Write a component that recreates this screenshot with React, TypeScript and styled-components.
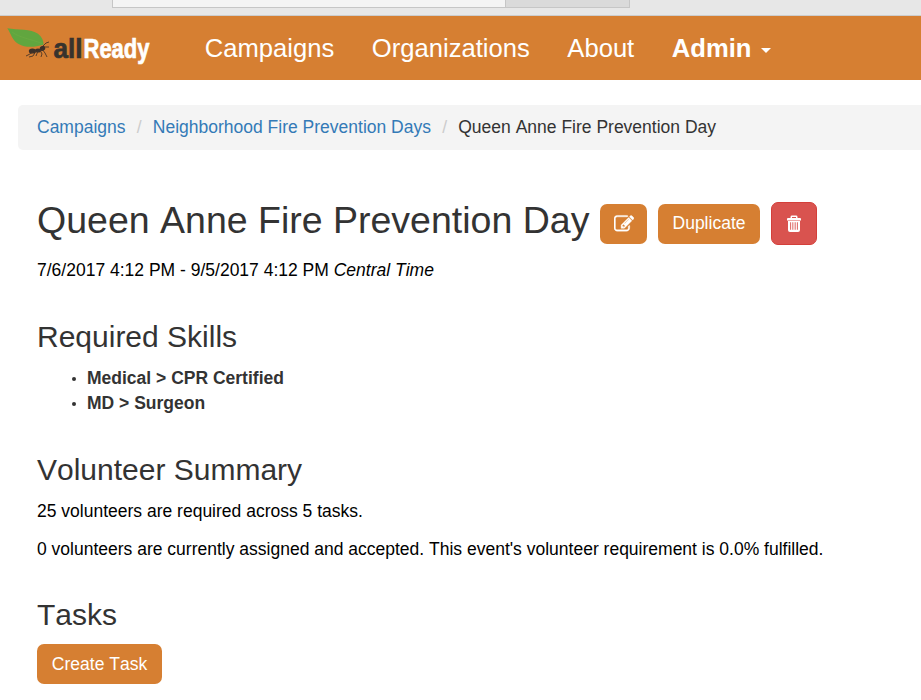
import React from 'react';
import styled, { createGlobalStyle } from 'styled-components';

const orange = '#d67f32';

const GlobalStyle = createGlobalStyle`
  * { box-sizing: border-box; }
  body {
    margin: 0;
    background: #fff;
    color: #000;
    font: 17.5px/25px "Liberation Sans", Arial, sans-serif;
    font-kerning: none;
    overflow: hidden;
  }
`;

const BrowserStrip = styled.div`
  display: flex;
  height: 16px;
  padding-left: 112px;
  background: #e7e7e7;
  border-bottom: 1px solid #cdcdcd;
`;

const AddressField = styled.div`
  width: 394px;
  height: 8px;
  background: #f4f4f4;
  border: 1px solid #c6c6c6;
  border-top: 0;
`;

const AddressActions = styled.div`
  width: 124px;
  height: 8px;
  background: #dadada;
  border: solid #c6c6c6;
  border-width: 0 1px 1px 0;
`;

const Navbar = styled.nav`
  display: flex;
  height: 64px;
  background: ${orange};
`;

const Logo = styled.svg`
  flex: none;
  width: 186px;
  height: 64px;
`;

const NavLink = styled.a<{ $bold?: boolean }>`
  display: flex;
  align-items: center;
  height: 64px;
  padding: 0 18.75px;
  color: #fff;
  font-size: 25.62px;
  font-weight: ${({ $bold }) => ($bold ? 700 : 400)};
  text-decoration: none;
`;

const Caret = styled.span`
  margin: 5px 0 0 10px;
  border: 5px solid transparent;
  border-top-color: #fff;
  border-bottom: 0;
`;

const Breadcrumb = styled.ol`
  display: flex;
  height: 45px;
  margin: 25px 0 0 18px;
  padding: 10px 19px;
  list-style: none;
  background: #f4f4f4;
  border-radius: 5px 0 0 5px;
  line-height: 24px;
`;

const Crumb = styled.li<{ $current?: boolean }>`
  color: ${({ $current }) => ($current ? '#333' : '#337ab7')};

  &:not(:first-child)::before {
    content: '/';
    padding: 0 11.2px;
    color: #ccc;
  }
`;

const Content = styled.main`
  padding: 0 37px;
`;

const TitleRow = styled.header`
  display: flex;
  align-items: center;
  height: 43px;
  margin-top: 52px;
`;

const Title = styled.h2`
  width: 552px;
  margin: -6px 11px 0 0;
  color: #333;
  font-size: 37.5px;
  font-weight: 400;
  line-height: 41px;
  white-space: nowrap;
`;

const Button = styled.button<{ $width: number; $danger?: boolean }>`
  display: flex;
  align-items: center;
  justify-content: center;
  flex: none;
  width: ${({ $width }) => $width}px;
  height: ${({ $danger }) => ($danger ? 43 : 40)}px;
  margin: 0 11px 0 0;
  padding: 0;
  color: #fff;
  background: ${({ $danger }) => ($danger ? '#d9534f' : orange)};
  border: ${({ $danger }) => ($danger ? '1px solid #d43f3a' : '0')};
  border-radius: 7px;
  font: 17.5px/25px "Liberation Sans", Arial, sans-serif;
  font-kerning: none;
`;

const Icon = styled.svg`
  width: 20px;
  height: 20px;
  fill: currentColor;
`;

const Dates = styled.p`
  margin: 13px 0 0;
`;

const Section = styled.section<{ $gap: number }>`
  margin-top: ${({ $gap }) => $gap}px;
`;

const Heading = styled.h3`
  margin: 0 0 13px;
  color: #333;
  font-size: 30px;
  font-weight: 400;
  line-height: 33px;
`;

const Skills = styled.ul`
  margin: 0;
  padding: 0;
  list-style: none;
`;

const Skill = styled.li`
  display: flex;
  align-items: center;
  padding-left: 35px;
  color: #333;
  font-weight: 700;

  &::before {
    content: '';
    width: 4px;
    height: 4px;
    margin-right: 11px;
    border-radius: 50%;
    background: #333;
  }
`;

const Paragraph = styled.p`
  margin: 0 0 13px;
`;

const EditIcon = () => (
  <Icon viewBox="0 0 1792 1792">
    <path
      stroke="currentColor"
      strokeWidth="35"
      d="M888 1184l116-116-152-152-116 116v56h96v96h56zm440-720q-16-16-33 1l-350 350q-17 17-1 33t33-1l350-350q17-17 1-33zm80 594v190q0 119-84.5 203.5t-203.5 84.5h-832q-119 0-203.5-84.5t-84.5-203.5v-832q0-119 84.5-203.5t203.5-84.5h832q63 0 117 25 15 7 18 23 3 17-9 29l-49 49q-14 14-32 8-23-6-45-6h-832q-66 0-113 47t-47 113v832q0 66 47 113t113 47h832q66 0 113-47t47-113v-126q0-13 9-22l64-64q15-15 35-7t20 29zm-96-738l288 288-672 672h-288v-288zm444 132l-92 92-288-288 92-92q28-28 68-28t68 28l152 152q28 28 28 68t-28 68z"
    />
  </Icon>
);

const TrashIcon = () => (
  <Icon viewBox="0 0 20 20">
    <path
      fillRule="evenodd"
      d="M6.5 4V3Q6.5 1.6 8 1.6H12Q13.5 1.6 13.5 3V4H16Q17 4 17 5V6.6H3V5Q3 4 4 4ZM8 4H12V3H8ZM4 7H16V16Q16 18 14 18H6Q4 18 4 16ZM6.2 8.3V15.8H7.1V8.3ZM8.4 8.3V15.8H9.3V8.3ZM10.7 8.3V15.8H11.6V8.3ZM12.9 8.3V15.8H13.8V8.3Z"
    />
  </Icon>
);

const AllReadyLogo = () => (
  <Logo viewBox="0 16 186 64" role="img" aria-label="allReady">
    <path
      d="M7.3 28.2C18 30 31 28.5 38 33.8C42 37 43.8 41 43.5 44.8C34 47.5 25 47.7 18.5 44C12 40.3 11 33.5 7.3 28.2Z"
      fill="#61a63f"
    />
    <path d="M12 32C20 38 31 39 42 43.5" fill="none" stroke="#6fac43" strokeWidth=".6" />
    <g fill="#3b3029">
      <ellipse cx="32.4" cy="51" rx="3.6" ry="2.6" />
      <ellipse cx="38" cy="50.4" rx="3" ry="2" />
      <ellipse cx="42.5" cy="48.4" rx="2.8" ry="2.4" transform="rotate(-30 42.5 48.4)" />
    </g>
    <path
      d="M33 52L29 54.5L26 56M36 51L33 56L29 57M38 51L36 56M40 50L42 54L41 57M42 49L45 53L47 57M43 46L46 43L49 42M44 47L49 47"
      fill="none"
      stroke="#4b3527"
      strokeWidth=".9"
    />
    <g fontFamily="Liberation Sans, Arial, sans-serif" fontWeight="700" fontSize="28">
      <text x="53.5" y="58" textLength="29" lengthAdjust="spacingAndGlyphs" fill="#37332d" stroke="#37332d" strokeWidth=".7">all</text>
      <text x="83.5" y="58" textLength="66" lengthAdjust="spacingAndGlyphs" fill="#fff" stroke="#fff" strokeWidth=".7">Ready</text>
    </g>
  </Logo>
);

export default function App() {
  return (
    <>
      <GlobalStyle />
      <BrowserStrip>
        <AddressField />
        <AddressActions />
      </BrowserStrip>
      <Navbar>
        <AllReadyLogo />
        <NavLink>Campaigns</NavLink>
        <NavLink>Organizations</NavLink>
        <NavLink>About</NavLink>
        <NavLink $bold>
          Admin
          <Caret />
        </NavLink>
      </Navbar>
      <Breadcrumb>
        <Crumb>Campaigns</Crumb>
        <Crumb>Neighborhood Fire Prevention Days</Crumb>
        <Crumb $current>Queen Anne Fire Prevention Day</Crumb>
      </Breadcrumb>
      <Content>
        <TitleRow>
          <Title>Queen Anne Fire Prevention Day</Title>
          <Button $width={47} aria-label="Edit"><EditIcon /></Button>
          <Button $width={102}>Duplicate</Button>
          <Button $width={46} $danger aria-label="Delete"><TrashIcon /></Button>
        </TitleRow>
        <Dates>
          7/6/2017 4:12 PM - 9/5/2017 4:12 PM <em>Central Time</em>
        </Dates>
        <Section $gap={37}>
          <Heading>Required Skills</Heading>
          <Skills>
            <Skill>Medical &gt; CPR Certified</Skill>
            <Skill>MD &gt; Surgeon</Skill>
          </Skills>
        </Section>
        <Section $gap={37}>
          <Heading>Volunteer Summary</Heading>
          <Paragraph>25 volunteers are required across 5 tasks.</Paragraph>
          <Paragraph>
            0 volunteers are currently assigned and accepted. This event's volunteer requirement is 0.0% fulfilled.
          </Paragraph>
        </Section>
        <Section $gap={36}>
          <Heading>Tasks</Heading>
          <Button $width={125}>Create Task</Button>
        </Section>
      </Content>
    </>
  );
}
